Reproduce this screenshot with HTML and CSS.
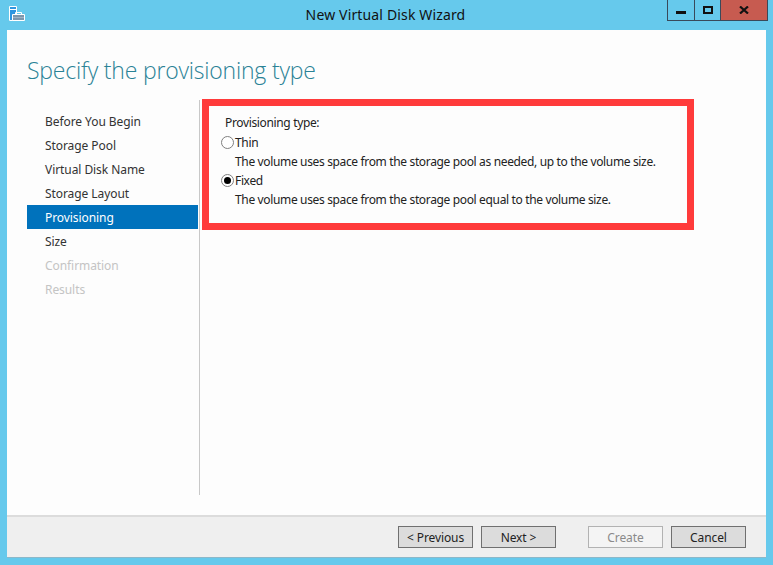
FILE: index.html
```html
<!DOCTYPE html>
<html lang="en">
<head>
<meta charset="utf-8">
<title>New Virtual Disk Wizard</title>
<link rel="stylesheet" href="styles.css">
</head>
<body>
<div class="frame">
  <header class="titlebar">
    <svg class="appicon" width="17" height="16" viewBox="0 0 17 16" aria-hidden="true">
      <path d="M0.500 0.500h7v14h-7z" fill="#2f96e0" stroke="#fff"/>
      <path d="M1 3.500h6" stroke="#fff" fill="none"/>
      <path d="M3.500 8.500h12v6h-12z" fill="#7d97ad" stroke="#fff"/>
      <path d="M6.500 8V6.500h6V8" fill="none" stroke="#fff"/>
      <path d="M4 11.500h11" stroke="#9fb3c4" fill="none"/>
    </svg>
    <div class="title">New Virtual Disk Wizard</div>
    <div class="controls">
      <div class="ctl ctl-min"><span class="min-glyph"></span></div>
      <div class="ctl ctl-max"><span class="max-glyph"></span></div>
      <div class="ctl ctl-close">
        <svg width="10" height="8" viewBox="0 0 10 8" aria-hidden="true"><path d="M1 0.500 L9 7.500 M9 0.500 L1 7.500" stroke="#111" stroke-width="2.200" fill="none"/></svg>
      </div>
    </div>
  </header>
  <div class="client">
    <main class="content">
      <h1 class="heading">Specify the provisioning type</h1>
      <div class="columns">
        <nav class="steps">
          <div class="step">Before You Begin</div>
          <div class="step">Storage Pool</div>
          <div class="step">Virtual Disk Name</div>
          <div class="step">Storage Layout</div>
          <div class="step step-active">Provisioning</div>
          <div class="step">Size</div>
          <div class="step step-off">Confirmation</div>
          <div class="step step-off">Results</div>
        </nav>
        <section class="pane">
          <div class="highlight">
            <div class="group-label">Provisioning type:</div>
            <div class="radio-row"><span class="radio"></span><span>Thin</span></div>
            <div class="desc">The volume uses space from the storage pool as needed, up to the volume size.</div>
            <div class="radio-row"><span class="radio radio-on"></span><span>Fixed</span></div>
            <div class="desc">The volume uses space from the storage pool equal to the volume size.</div>
          </div>
        </section>
      </div>
    </main>
    <footer class="footer">
      <button class="btn">&lt; Previous</button>
      <button class="btn">Next &gt;</button>
      <button class="btn btn-off gap-left">Create</button>
      <button class="btn">Cancel</button>
    </footer>
  </div>
</div>
</body>
</html>
```
FILE: styles.css
```css
* { box-sizing: border-box; }
html, body { margin: 0; height: 100%; }
body {
  background: #66c9ec;
  font-family: "Noto Sans", "Open Sans", sans-serif;
  font-size: 12px;
  color: #222;
  overflow: hidden;
}
.frame {
  width: 773px;
  height: 565px;
  display: flex;
  flex-direction: column;
  padding: 0 7px 7px 7px;
}
.titlebar {
  height: 30px;
  flex: none;
  display: flex;
  justify-content: center;
  position: relative;
}
.appicon { position: absolute; left: 2px; top: 6px; }
.title {
  font-size: 14px;
  letter-spacing: 0.15px;
  color: #111;
  line-height: 29px;
  margin-right: 2px;
}
.controls {
  position: absolute;
  left: 660px;
  top: 0;
  height: 21px;
  display: flex;
  border: 1px solid #39495a;
  border-top: 0;
}
.ctl {
  display: flex;
  align-items: center;
  justify-content: center;
  height: 20px;
}
.ctl-min { width: 27px; border-right: 1px solid #39495a; }
.ctl-max { width: 26px; border-right: 1px solid #39495a; }
.ctl-close { width: 46px; background: #c75b50; }
.min-glyph { width: 10px; height: 3px; background: #111; margin-top: 5px; }
.max-glyph { width: 10px; height: 8px; border: 2px solid #111; }
.client {
  flex: 1;
  display: flex;
  flex-direction: column;
  background: #fdfdfd;
  border-bottom: 1px solid #8cb8c9;
}
.content { flex: 1; display: flex; flex-direction: column; padding: 0 0 0 20px; min-height: 0; }
.heading {
  margin: 0;
  padding-top: 24px;
  height: 75px;
  font-size: 23px;
  letter-spacing: -0.2px;
  line-height: 32px;
  font-weight: 300;
  color: #2a8296;
  font-family: "Open Sans", "Noto Sans", sans-serif;
}
.columns { display: flex; flex: 1; min-height: 0; padding-bottom: 20px; }
.steps {
  width: 173px;
  border-right: 1px solid #c8c8c8;
  margin-top: -5px;
  padding-top: 9px;
  padding-right: 1px;
  letter-spacing: -0.07px;
}
.step { height: 24px; line-height: 26px; padding-left: 18px; color: #333; }
.step-active { background: #0072bc; color: #fff; }
.step-off { color: #c4c4c4; }
.pane { flex: 1; padding: 0 0 0 2px; margin-top: -6px; }
.highlight {
  width: 492px;
  height: 131px;
  border: 7px solid #ff3b3b;
  padding: 7px 0 0 12px;
  line-height: 19px;
  letter-spacing: -0.35px;
}
.group-label { margin-left: 4px; height: 20px; }
.radio-row { display: flex; align-items: center; height: 19px; }
.radio-row + .desc { height: 19px; margin-left: 14px; }
.radio {
  width: 13px;
  height: 13px;
  margin-right: 1px;
  border-radius: 50%;
  border: 1px solid #808080;
  background: #fff;
  position: relative;
  flex: none;
}
.radio-on::after {
  content: "";
  position: absolute;
  left: 2px;
  top: 2px;
  width: 7px;
  height: 7px;
  border-radius: 50%;
  background: #000;
}
.footer {
  height: 42px;
  flex: none;
  background: #efefef;
  border-top: 2px solid #dcdcdc;
  display: flex;
  align-items: flex-start;
  padding: 9px 20px 0 391px;
  gap: 8px;
}
.btn {
  width: 75px;
  height: 22px;
  padding: 2px 0 0;
  font: inherit;
  letter-spacing: -0.1px;
  line-height: 18px;
  color: #222;
  background: #dcdcdc;
  border: 1px solid #707070;
  border-radius: 0;
}
.btn-off { background: #f4f4f4; border-color: #b2b2b2; color: #8a8a8a; }
.gap-left { margin-left: 24px; }
```
